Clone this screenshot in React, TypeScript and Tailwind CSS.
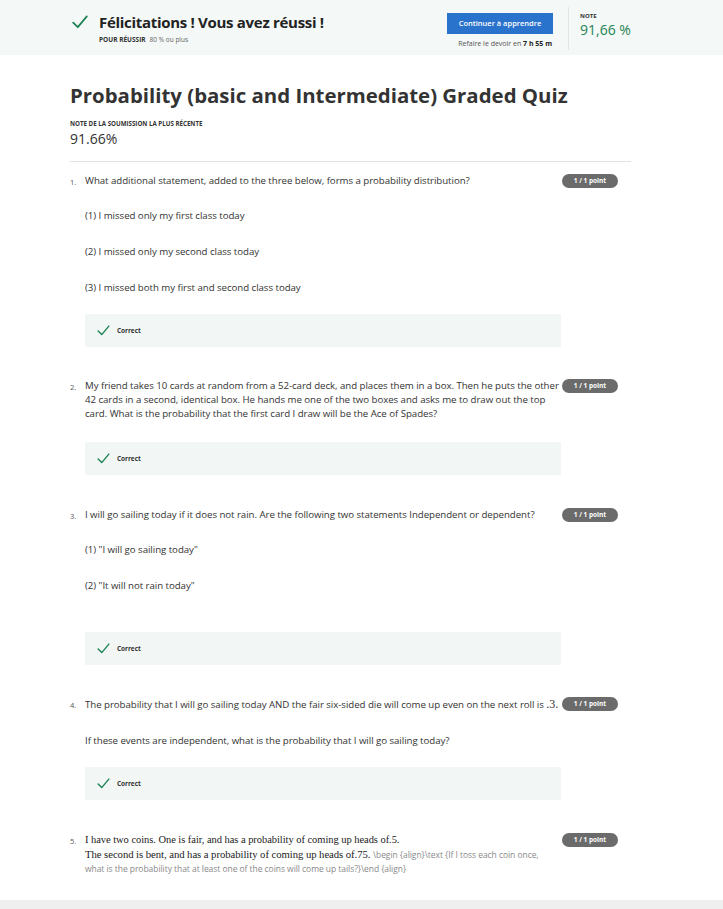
import React from 'react';

function Tick({ className }: { className?: string }) {
  return (
    <svg viewBox="0 0 16 14" fill="none" stroke="currentColor" strokeWidth={1.8} className={className}>
      <path d="M1.2 7.6 L5.8 12.2 L14.8 1.4" strokeLinecap="round" strokeLinejoin="round" />
    </svg>
  );
}

function Badge() {
  return (
    <div className="ml-[1px] flex h-[14px] w-[56px] shrink-0 items-center justify-center rounded-full bg-[#6b6b6b] text-[6.5px] font-bold text-white">
      1 / 1 point
    </div>
  );
}

function Correct({ className = '' }: { className?: string }) {
  return (
    <div className={`flex h-[33px] w-[476px] items-center bg-[#f2f7f5] pl-[12px] ${className}`}>
      <Tick className="h-[11px] w-[13px] text-[#1f8354]" />
      <span className="ml-[7px] text-[6.5px] leading-[10px] font-bold text-[#333]">Correct</span>
    </div>
  );
}

function Question({ n, children, className = '' }: { n: number; children: React.ReactNode; className?: string }) {
  return (
    <div className={`flex w-[548px] ${className}`}>
      <div className="w-[15px] shrink-0 pt-[1px] text-[7.5px] leading-[14px] text-[#555]">{n}.</div>
      <div className="w-[476px] shrink-0 text-[9.7px] leading-[14px] tracking-[-0.05px] text-[#333]">{children}</div>
      <Badge />
    </div>
  );
}

export default function App() {
  return (
    <div className="flex min-h-[909px] flex-col bg-white font-['Open_Sans',sans-serif] text-[#333]">
      {/* banner */}
      <div className="flex h-[55px] shrink-0 bg-[#f4f8f7] pl-[72px]">
        <div className="flex flex-1 pt-[13px]">
          <Tick className="mt-[2px] h-[14px] w-[16px] text-[#1f8354]" />
          <div className="ml-[11px]">
            <div className="text-[15px] leading-[18px] font-bold tracking-[-0.3px] text-[#222]">
              Félicitations ! Vous avez réussi !
            </div>
            <div className="mt-[4px] text-[6.5px] leading-[9px]">
              <span className="font-bold text-[#333]">POUR RÉUSSIR</span>
              <span className="ml-[4px] text-[#666]">80 % ou plus</span>
            </div>
          </div>
        </div>
        <div className="flex flex-col items-end pt-[13px]">
          <div className="flex h-[21px] w-[106px] items-center justify-center bg-[#2a73cc] text-[7.5px] font-semibold text-white">
            Continuer à apprendre
          </div>
          <div className="mt-[5px] mr-[1px] text-[7px] leading-[10px] text-[#555]">
            Refaire le devoir en <span className="font-bold text-[#222]">7 h 55 m</span>
          </div>
        </div>
        <div className="mt-[7px] ml-[15px] h-[43px] w-px bg-[#e2e6e5]" />
        <div className="ml-[11px] w-[143px] pt-[12px]">
          <div className="text-[6px] leading-[8px] font-bold text-[#333]">NOTE</div>
          <div className="mt-[1px] text-[14px] leading-[18px] text-[#1f8354]">91,66 %</div>
        </div>
      </div>

      {/* main */}
      <div className="flex-1 px-[70px] pt-[28px] pb-[24px]">
        <h1 className="text-[20.4px] leading-[24px] font-bold text-[#333]">
          Probability (basic and Intermediate) Graded Quiz
        </h1>
        <div className="mt-[13px] text-[6.2px] leading-[8px] font-bold text-[#333]">
          NOTE DE LA SOUMISSION LA PLUS RÉCENTE
        </div>
        <div className="mt-[2px] text-[14px] leading-[18px] text-[#333]">91.66%</div>
        <div className="mt-[13px] h-px w-[561px] bg-[#e1e1e1]" />

        <Question n={1} className="mt-[12px]">
          What additional statement, added to the three below, forms a probability distribution?
          <p className="mt-[21px]">(1) I missed only my first class today</p>
          <p className="mt-[22px]">(2) I missed only my second class today</p>
          <p className="mt-[22px]">(3) I missed both my first and second class today</p>
          <Correct className="mt-[19px]" />
        </Question>

        <Question n={2} className="mt-[32px]">
          My friend takes 10 cards at random from a 52-card deck, and places them in a box. Then he puts the other 42 cards in a second, identical box. He hands me one of the two boxes and asks me to draw out the top card. What is the probability that the first card I draw will be the Ace of Spades?
          <Correct className="mt-[21px]" />
        </Question>

        <Question n={3} className="mt-[33px]">
          I will go sailing today if it does not rain. Are the following two statements Independent or dependent?
          <p className="mt-[21px]">(1) "I will go sailing today"</p>
          <p className="mt-[22px]">(2) "It will not rain today"</p>
          <Correct className="mt-[39px]" />
        </Question>

        <Question n={4} className="mt-[32px]">
          <p className="whitespace-nowrap">
            The probability that I will go sailing today AND the fair six-sided die will come up even on the next roll is{' '}
            <span className="font-['Liberation_Serif',serif] text-[12px] leading-[14px]">.3.</span>
          </p>
          <p className="mt-[22px]">If these events are independent, what is the probability that I will go sailing today?</p>
          <Correct className="mt-[19px]" />
        </Question>

        <Question n={5} className="mt-[33px]">
          <p className="font-['Liberation_Serif',serif] text-[10.5px] leading-[14px] text-[#222]">
            I have two coins. One is fair, and has a probability of coming up heads of.5.
          </p>
          <p className="leading-[14px]">
            <span className="font-['Liberation_Serif',serif] text-[10.7px] text-[#222]">
              The second is bent, and has a probability of coming up heads of.75.
            </span>{' '}
            <span className="text-[8.5px] text-[#8a8a8a]">
              \begin {'{align}'}\text {'{'}If I toss each coin once,
            </span>
          </p>
          <p className="text-[8.5px] leading-[14px] text-[#8a8a8a]">
            what is the probability that at least one of the coins will come up tails?{'}'}\end {'{align}'}
          </p>
        </Question>
      </div>

      <div className="h-[12px] shrink-0 bg-[#efefef]" />
    </div>
  );
}
